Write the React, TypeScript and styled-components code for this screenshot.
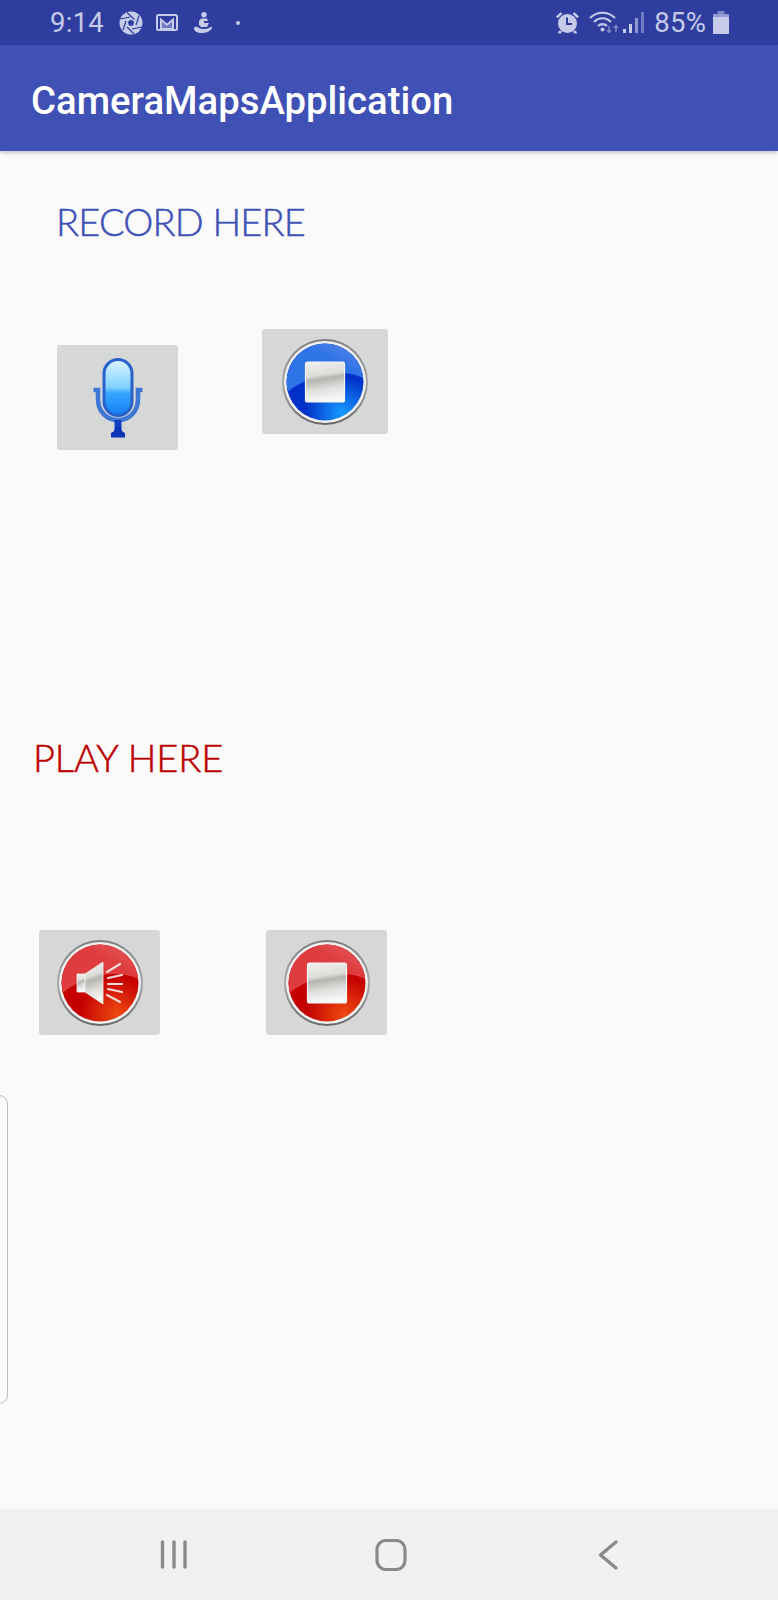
import React from "react";
import styled, { createGlobalStyle } from "styled-components";

const GlobalStyle = createGlobalStyle`
  html, body {
    margin: 0;
    padding: 0;
    background: #fafafa;
  }
`;

const Screen = styled.div`
  position: relative;
  width: 778px;
  height: 1600px;
  display: flex;
  flex-direction: column;
  overflow: hidden;
  background: #fafafa;
  font-family: Roboto, "Liberation Sans", sans-serif;
`;

const StatusBar = styled.div`
  height: 45px;
  flex: none;
  display: flex;
  align-items: center;
  justify-content: space-between;
  padding: 0 49px 0 50px;
  background: #2f3d9e;
  color: #c6cbe9;
`;

const StatusGroup = styled.div`
  display: flex;
  align-items: center;
`;

const StatusText = styled.span<{ $gap?: number }>`
  margin-left: ${(p) => p.$gap ?? 0}px;
  font-size: 27.5px;
  line-height: 45px;
  letter-spacing: 0.2px;
`;

const StatusIcon = styled.svg<{ $gap: number }>`
  display: block;
  flex: none;
  margin-left: ${(p) => p.$gap}px;
`;

const AppBar = styled.div`
  position: relative;
  z-index: 1;
  height: 106px;
  flex: none;
  box-sizing: border-box;
  display: flex;
  align-items: center;
  padding: 4px 0 0 31px;
  background: #3f51b5;
  color: #ffffff;
  font-size: 38.3px;
  font-weight: 500;
  box-shadow: 0 2px 4px rgba(0, 0, 0, 0.2);
`;

const Content = styled.div`
  flex: 1;
`;

const SectionLabel = styled.div<{ $top: number; $left: number; $color: string; $spacing: number }>`
  margin: ${(p) => p.$top}px 0 0 ${(p) => p.$left}px;
  height: 40px;
  font-family: Lato, "Liberation Sans", sans-serif;
  font-size: 38px;
  font-weight: 300;
  line-height: 40px;
  letter-spacing: ${(p) => p.$spacing}px;
  color: ${(p) => p.$color};
  -webkit-text-stroke: 0.5px ${(p) => p.$color};
`;

const ButtonRow = styled.div<{ $top: number; $left: number; $gap: number }>`
  display: flex;
  align-items: flex-start;
  gap: ${(p) => p.$gap}px;
  margin: ${(p) => p.$top}px 0 0 ${(p) => p.$left}px;
`;

const ImageButton = styled.button<{ $width: number; $drop?: number }>`
  width: ${(p) => p.$width}px;
  height: 105px;
  margin-top: ${(p) => p.$drop ?? 0}px;
  padding: 0;
  border: 0;
  border-radius: 3px;
  background: #d6d8d8;
  display: flex;
  align-items: center;
  justify-content: center;
`;

const DrawerEdge = styled.div`
  position: absolute;
  left: -12px;
  top: 1095px;
  width: 18px;
  height: 307px;
  border: 1.5px solid #bdbdbd;
  border-radius: 9px;
`;

const NavBar = styled.div`
  height: 91px;
  flex: none;
  display: flex;
  align-items: center;
  gap: 177px;
  padding: 1px 0 0 154px;
  box-sizing: border-box;
  background: #f1f1f1;
  color: #8a8a8a;
`;

type Tone = "blue" | "red";

const tones = {
  blue: { top: "#2f74e6", topEdge: "#5f86e6", low: "#0030c8", lowBright: "#189cff" },
  red: { top: "#de3c3e", topEdge: "#e65c5e", low: "#c40000", lowBright: "#ee4a10" },
};

function GlossyDisc({ id, tone, children }: { id: string; tone: Tone; children: React.ReactNode }) {
  const c = tones[tone];
  return (
    <svg width="92" height="92" viewBox="-46 -46 92 92">
      <defs>
        <linearGradient id={`${id}-rim`} x1="0" y1="0" x2="0" y2="1">
          <stop offset="0" stopColor="#7c7c7c" />
          <stop offset="0.5" stopColor="#a8a8a8" />
          <stop offset="1" stopColor="#666666" />
        </linearGradient>
        <linearGradient id={`${id}-top`} x1="0.2" y1="0.9" x2="0.9" y2="0">
          <stop offset="0" stopColor={c.top} />
          <stop offset="0.6" stopColor={c.top} />
          <stop offset="1" stopColor={c.topEdge} />
        </linearGradient>
        <radialGradient id={`${id}-low`} cx="0.72" cy="0.9" r="0.8">
          <stop offset="0" stopColor={c.lowBright} />
          <stop offset="0.6" stopColor={c.low} />
          <stop offset="1" stopColor={c.low} />
        </radialGradient>
        <clipPath id={`${id}-clip`}>
          <circle r="38.5" />
        </clipPath>
      </defs>
      <circle r="43" fill={`url(#${id}-rim)`} />
      <circle r="41" fill="#f0f0f0" />
      <circle r="38.5" fill={`url(#${id}-low)`} />
      <g clipPath={`url(#${id}-clip)`}>
        <path d="M-40 -40H40V-3C20 -14 -14 -10 -40 12Z" fill={`url(#${id}-top)`} />
      </g>
      {children}
    </svg>
  );
}

function GlossFace({ id }: { id: string }) {
  return (
    <linearGradient id={id} x1="0.1" y1="0" x2="0.25" y2="1">
      <stop offset="0" stopColor="#f0f0f0" />
      <stop offset="0.36" stopColor="#dcdcd8" />
      <stop offset="0.46" stopColor="#b4b4b0" />
      <stop offset="0.72" stopColor="#e0e0de" />
      <stop offset="1" stopColor="#f8f8f6" />
    </linearGradient>
  );
}

function StopDisc({ id, tone }: { id: string; tone: Tone }) {
  return (
    <GlossyDisc id={id} tone={tone}>
      <defs>
        <GlossFace id={`${id}-face`} />
      </defs>
      <rect x="-19.5" y="-20" width="39" height="40" rx="2" fill={`url(#${id}-face)`} stroke="#f6f6f6" strokeWidth="1.2" />
    </GlossyDisc>
  );
}

function SpeakerDisc({ id }: { id: string }) {
  return (
    <GlossyDisc id={id} tone="red">
      <defs>
        <GlossFace id={`${id}-face`} />
      </defs>
      <path d="M-23 -9H-15V9H-23Z" fill={`url(#${id}-face)`} stroke="#f2f2f2" strokeWidth="0.8" />
      <path d="M-15 -9L3 -21V21L-15 9Z" fill={`url(#${id}-face)`} stroke="#f2f2f2" strokeWidth="0.8" />
      <g stroke="#f3d8d4" strokeWidth="2.2" strokeLinecap="round">
        <path d="M7 -11L20 -19" />
        <path d="M8 -5L22 -8" />
        <path d="M8 1H22" />
        <path d="M8 6L22 9" />
        <path d="M7 12L20 19" />
      </g>
    </GlossyDisc>
  );
}

function MicIcon() {
  return (
    <svg width="54" height="80" viewBox="0 0 54 80">
      <defs>
        <linearGradient id="mic-body" x1="0" y1="0" x2="0" y2="1">
          <stop offset="0" stopColor="#dff6ff" />
          <stop offset="0.5" stopColor="#7fd0ff" />
          <stop offset="0.6" stopColor="#38a6ff" />
          <stop offset="1" stopColor="#0f7df0" />
        </linearGradient>
      </defs>
      <path d="M2.5 32H7V41C7 54 16 62 27 62C38 62 47 54 47 41V32H51.5" fill="none" stroke="#3f78d4" strokeWidth="4.6" />
      <path d="M27 62V72" stroke="#0d3fc0" strokeWidth="7" />
      <path d="M20 79.5V75C23 74 24 72 24 69H30C30 72 31 74 34 75V79.5Z" fill="#0a35b4" />
      <rect x="13" y="1.5" width="28" height="56" rx="14" fill="url(#mic-body)" stroke="#2a62cc" strokeWidth="3" />
    </svg>
  );
}

export default function App() {
  return (
    <Screen>
      <GlobalStyle />
      <StatusBar>
        <StatusGroup>
          <StatusText>9:14</StatusText>
          {/* aperture */}
          <StatusIcon $gap={15} width="24" height="24" viewBox="0 0 24 24">
            <circle cx="12" cy="12" r="11.5" fill="currentColor" />
            <g stroke="#2f3d9e" strokeWidth="1.2">
              <path d="M8 1.5L15.5 8.5" />
              <path d="M20 4.5L17 14" />
              <path d="M23 16L13 18" />
              <path d="M15 23L8 16" />
              <path d="M4 19L7 10" />
              <path d="M1 8L11 6" />
            </g>
            <path d="M12 8.5L15.2 10.8L14 14.8H10L8.8 10.8Z" fill="#2f3d9e" />
          </StatusIcon>
          {/* mail */}
          <StatusIcon $gap={13} width="22" height="17" viewBox="0 0 22 17">
            <rect x="1" y="1" width="20" height="15" rx="1.5" fill="#2f3d9e" stroke="currentColor" strokeWidth="2" />
            <path d="M4 15V3.5L11 9.5L18 3.5V15Z" fill="currentColor" />
            <path d="M6 14V7.5L11 12L16 7.5V14Z" fill="#6f7bc2" />
          </StatusIcon>
          {/* silent / person glyph */}
          <StatusIcon $gap={15} width="20" height="21" viewBox="0 0 20 21">
            <circle cx="11" cy="2.8" r="2.7" fill="currentColor" />
            <path d="M8 6.5H14L15 9H11V11H16L14 15H8L6 13V9Z" fill="currentColor" />
            <path d="M1 16C2 14 4 15 6 16C10 18 15 17 19 14.5C19.5 18 15 21 9 21C4 21 1 19 1 16Z" fill="currentColor" />
          </StatusIcon>
          <StatusIcon $gap={23} width="4" height="4" viewBox="0 0 4 4">
            <circle cx="2" cy="2" r="2" fill="currentColor" />
          </StatusIcon>
        </StatusGroup>
        <StatusGroup>
          {/* alarm */}
          <StatusIcon $gap={0} width="25" height="23" viewBox="0 0 25 23">
            <circle cx="12.5" cy="12.5" r="9.5" fill="currentColor" />
            <path d="M1 5.5L5.5 1.2L7.5 2.8L2.8 7.2Z" fill="currentColor" />
            <path d="M24 5.5L19.5 1.2L17.5 2.8L22.2 7.2Z" fill="currentColor" />
            <path d="M4 19.5L2.8 22.5H6L7 20.5Z" fill="currentColor" />
            <path d="M21 19.5L22.2 22.5H19L18 20.5Z" fill="currentColor" />
            <path d="M12 6.5V13H17" fill="none" stroke="#2f3d9e" strokeWidth="2" />
          </StatusIcon>
          {/* wifi with data arrows */}
          <StatusIcon $gap={9} width="31" height="23" viewBox="0 0 31 23">
            <g fill="none" stroke="currentColor" strokeWidth="2.2">
              <path d="M1 7C8 0 19 0 26 7" />
              <path d="M5 11C10 6 17 6 22 11" />
              <path d="M9 15C11.5 12.5 15.5 12.5 18 15" />
            </g>
            <circle cx="13.5" cy="18.5" r="2" fill="currentColor" />
            <path d="M20 15V21M18 19L20 21.5L22 19" fill="none" stroke="#7e88c8" strokeWidth="1.4" />
            <path d="M27 21V15M25 17L27 14.5L29 17" fill="none" stroke="#7e88c8" strokeWidth="1.4" />
          </StatusIcon>
          {/* signal */}
          <StatusIcon $gap={3} width="21" height="23" viewBox="0 0 21 23">
            <rect x="0" y="18" width="3" height="4" fill="currentColor" />
            <rect x="6" y="13" width="3" height="9" fill="currentColor" />
            <rect x="12" y="7" width="3" height="15" fill="#8d96d0" />
            <rect x="18" y="1" width="3" height="21" fill="#6f7bc2" />
          </StatusIcon>
          <StatusText $gap={10}>85%</StatusText>
          {/* battery */}
          <StatusIcon $gap={7} width="16" height="23" viewBox="0 0 16 23">
            <rect x="4.5" y="0" width="7" height="3" fill="#7e88c8" />
            <rect x="0" y="3" width="16" height="4" fill="#949dd6" />
            <rect x="0" y="6" width="16" height="17" fill="currentColor" />
          </StatusIcon>
        </StatusGroup>
      </StatusBar>

      <AppBar>CameraMapsApplication</AppBar>

      <Content>
        <SectionLabel $top={50} $left={56} $color="#3f51b5" $spacing={-0.8}>
          RECORD HERE
        </SectionLabel>
        <ButtonRow $top={88} $left={57} $gap={84}>
          <ImageButton $width={121} $drop={16}>
            <MicIcon />
          </ImageButton>
          <ImageButton $width={126}>
            <StopDisc id="rec-stop" tone="blue" />
          </ImageButton>
        </ButtonRow>

        <SectionLabel $top={287} $left={33} $color="#bb0000" $spacing={-0.1}>
          PLAY HERE
        </SectionLabel>
        <ButtonRow $top={153} $left={39} $gap={106}>
          <ImageButton $width={121}>
            <SpeakerDisc id="play-start" />
          </ImageButton>
          <ImageButton $width={121}>
            <StopDisc id="play-stop" tone="red" />
          </ImageButton>
        </ButtonRow>
      </Content>

      <DrawerEdge />

      <NavBar>
        <svg width="40" height="32" viewBox="0 0 40 32">
          <g stroke="currentColor" strokeWidth="3.4" strokeLinecap="round">
            <path d="M8.5 3V28" />
            <path d="M20 3V28" />
            <path d="M31 3V28" />
          </g>
        </svg>
        <svg width="40" height="32" viewBox="0 0 40 32">
          <rect x="6" y="1.5" width="28" height="29" rx="9" fill="none" stroke="currentColor" strokeWidth="3.2" />
        </svg>
        <svg width="40" height="32" viewBox="0 0 40 32">
          <path d="M28 3L12.5 16L28 29" fill="none" stroke="currentColor" strokeWidth="3.4" strokeLinecap="round" strokeLinejoin="round" />
        </svg>
      </NavBar>
    </Screen>
  );
}
